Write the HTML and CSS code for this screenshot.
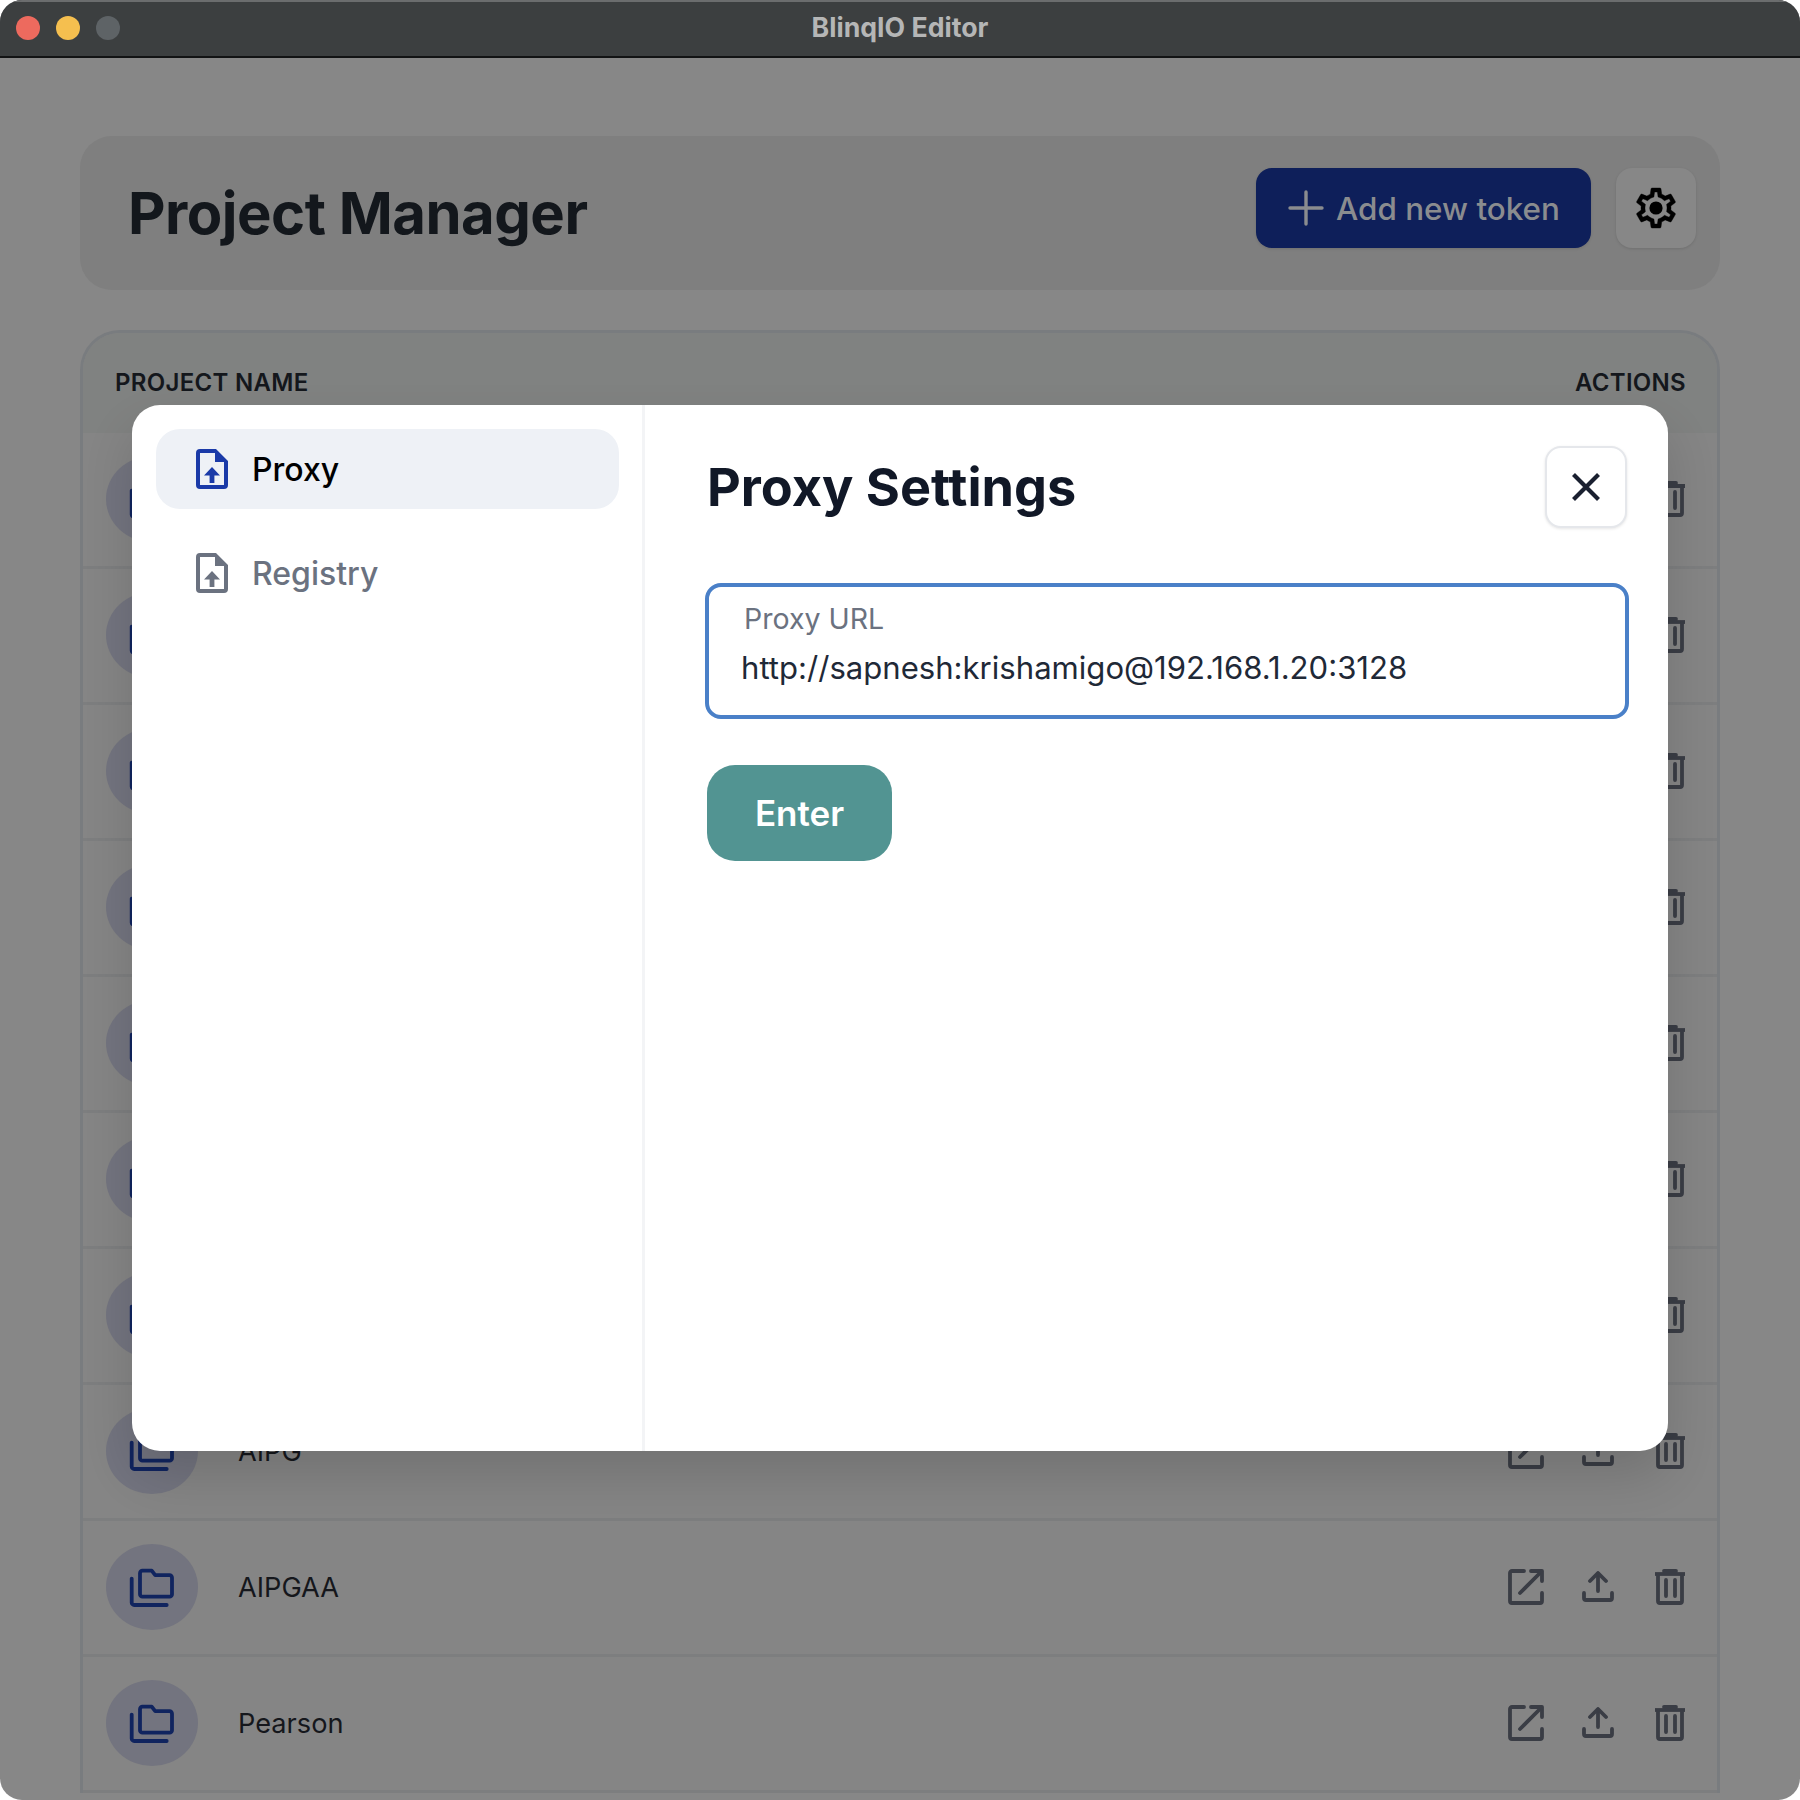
FILE: index.html
```html
<!DOCTYPE html>
<html lang="en">
<head>
<meta charset="utf-8">
<title>BlinqIO Editor</title>
<link rel="stylesheet" href="styles.css">
</head>
<body>
<svg class="defs" width="0" height="0" aria-hidden="true">
  <symbol id="i-folder" viewBox="0 0 46 40">
    <g fill="none" stroke="currentColor" stroke-width="3.8" stroke-linecap="round" stroke-linejoin="round">
      <path d="M3.7 11.6V35.5a2.5 2.5 0 0 0 2.5 2.5H38.7"/>
      <path d="M14.5 3.7h9.2l3.5 4.5h14.3a2.5 2.5 0 0 1 2.5 2.5v16.5a2.5 2.5 0 0 1-2.5 2.5H14.5a2.5 2.5 0 0 1-2.5-2.5V6.2a2.5 2.5 0 0 1 2.5-2.5z"/>
    </g>
  </symbol>
  <symbol id="i-open" viewBox="0 0 36 36">
    <g fill="none" stroke="currentColor" stroke-width="3.8" stroke-linecap="round" stroke-linejoin="round">
      <path d="M16 2H4a2 2 0 0 0-2 2v28a2 2 0 0 0 2 2h28a2 2 0 0 0 2-2V24"/>
      <path d="M12 24L33 3"/>
      <path d="M23 2h11v10"/>
    </g>
  </symbol>
  <symbol id="i-upload" viewBox="0 0 32 31">
    <g fill="none" stroke="currentColor" stroke-width="3.8" stroke-linecap="round" stroke-linejoin="round">
      <path d="M16 3v17"/>
      <path d="M8 10l8-8 8 8"/>
      <path d="M2 22v5a2 2 0 0 0 2 2h24a2 2 0 0 0 2-2v-5"/>
    </g>
  </symbol>
  <symbol id="i-trash" viewBox="0 0 32 36">
    <g fill="none" stroke="currentColor" stroke-width="3.8" stroke-linejoin="round">
      <path d="M1 5h30"/>
      <path d="M10 2h12" stroke-linecap="round"/>
      <path d="M4 5v27a2 2 0 0 0 2 2h20a2 2 0 0 0 2-2V5"/>
      <path d="M12 11v16M21 11v16" stroke-linecap="round"/>
    </g>
  </symbol>
  <symbol id="i-doc" viewBox="0 0 32 40">
    <path fill="currentColor" fill-rule="evenodd" d="M4 0h16l12 12v24a4 4 0 0 1-4 4H4a4 4 0 0 1-4-4V4a4 4 0 0 1 4-4zM4 4v32h24V13H19V4z"/>
    <path fill="currentColor" d="M16 18l8 8.5h-5.6V34h-4.8v-7.5H8z"/>
  </symbol>
</svg>

<div class="window">
  <header class="titlebar">
    <div class="lights">
      <span class="light light-red"></span>
      <span class="light light-yellow"></span>
      <span class="light light-gray"></span>
    </div>
    <div class="app-title">BlinqIO Editor</div>
  </header>

  <main class="page">
    <section class="page-head">
      <h1 class="page-title">Project Manager</h1>
      <div class="head-actions">
        <button class="btn-add" type="button">
          <svg class="plus" viewBox="0 0 36 36"><path d="M18 2v32M2 18h32" fill="none" stroke="currentColor" stroke-width="3.4" stroke-linecap="round"/></svg>
          <span class="btn-add-text">Add new token</span>
        </button>
        <button class="btn-gear" type="button">
          <svg class="gear" viewBox="0 0 24 24"><path fill="currentColor" stroke="currentColor" stroke-width=".2" d="M19.43 12.98c.04-.32.07-.64.07-.98 0-.34-.03-.66-.07-.98l2.11-1.65c.19-.15.24-.42.12-.64l-2-3.46c-.09-.16-.26-.25-.44-.25-.06 0-.12.01-.17.03l-2.49 1c-.52-.4-1.08-.73-1.69-.98l-.38-2.65C14.46 2.18 14.25 2 14 2h-4c-.25 0-.46.18-.49.42l-.38 2.65c-.61.25-1.17.59-1.69.98l-2.49-1c-.06-.02-.12-.03-.18-.03-.17 0-.34.09-.43.25l-2 3.46c-.13.22-.07.49.12.64l2.11 1.65c-.04.32-.07.65-.07.98 0 .33.03.66.07.98l-2.11 1.65c-.19.15-.24.42-.12.64l2 3.46c.09.16.26.25.44.25.06 0 .12-.01.17-.03l2.49-1c.52.4 1.08.73 1.69.98l.38 2.65c.03.24.24.42.49.42h4c.25 0 .46-.18.49-.42l.38-2.65c.61-.25 1.17-.59 1.69-.98l2.49 1c.06.02.12.03.18.03.17 0 .34-.09.43-.25l2-3.46c.12-.22.07-.49-.12-.64l-2.11-1.65zm-1.98-1.71c.04.31.05.52.05.73 0 .21-.02.43-.05.73l-.14 1.13.89.7 1.08.84-.7 1.21-1.27-.51-1.04-.42-.9.68c-.43.32-.84.56-1.25.73l-1.06.43-.16 1.13-.2 1.35h-1.4l-.19-1.35-.16-1.13-1.06-.43c-.43-.18-.83-.41-1.23-.71l-.91-.7-1.06.43-1.27.51-.7-1.21 1.08-.84.89-.7-.14-1.13c-.03-.31-.05-.54-.05-.74s.02-.43.05-.73l.14-1.13-.89-.7-1.08-.84.7-1.21 1.27.51 1.04.42.9-.68c.43-.32.84-.56 1.25-.73l1.06-.43.16-1.13.2-1.35h1.39l.19 1.35.16 1.13 1.06.43c.43.18.83.41 1.23.71l.91.7 1.06-.43 1.27-.51.7 1.21-1.07.85-.89.7.14 1.13z"/><circle cx="12" cy="12" r="3.3" fill="currentColor"/></svg>
        </button>
      </div>
    </section>

    <section class="table">
      <div class="table-head">
        <span>PROJECT NAME</span>
        <span>ACTIONS</span>
      </div>
      <div class="row"><span class="badge"><svg class="folder"><use href="#i-folder"/></svg></span><span class="name"></span><span class="acts"><svg class="a-open"><use href="#i-open"/></svg><svg class="a-upload"><use href="#i-upload"/></svg><svg class="a-trash"><use href="#i-trash"/></svg></span></div>
      <div class="row"><span class="badge"><svg class="folder"><use href="#i-folder"/></svg></span><span class="name"></span><span class="acts"><svg class="a-open"><use href="#i-open"/></svg><svg class="a-upload"><use href="#i-upload"/></svg><svg class="a-trash"><use href="#i-trash"/></svg></span></div>
      <div class="row"><span class="badge"><svg class="folder"><use href="#i-folder"/></svg></span><span class="name"></span><span class="acts"><svg class="a-open"><use href="#i-open"/></svg><svg class="a-upload"><use href="#i-upload"/></svg><svg class="a-trash"><use href="#i-trash"/></svg></span></div>
      <div class="row"><span class="badge"><svg class="folder"><use href="#i-folder"/></svg></span><span class="name"></span><span class="acts"><svg class="a-open"><use href="#i-open"/></svg><svg class="a-upload"><use href="#i-upload"/></svg><svg class="a-trash"><use href="#i-trash"/></svg></span></div>
      <div class="row"><span class="badge"><svg class="folder"><use href="#i-folder"/></svg></span><span class="name"></span><span class="acts"><svg class="a-open"><use href="#i-open"/></svg><svg class="a-upload"><use href="#i-upload"/></svg><svg class="a-trash"><use href="#i-trash"/></svg></span></div>
      <div class="row"><span class="badge"><svg class="folder"><use href="#i-folder"/></svg></span><span class="name"></span><span class="acts"><svg class="a-open"><use href="#i-open"/></svg><svg class="a-upload"><use href="#i-upload"/></svg><svg class="a-trash"><use href="#i-trash"/></svg></span></div>
      <div class="row"><span class="badge"><svg class="folder"><use href="#i-folder"/></svg></span><span class="name"></span><span class="acts"><svg class="a-open"><use href="#i-open"/></svg><svg class="a-upload"><use href="#i-upload"/></svg><svg class="a-trash"><use href="#i-trash"/></svg></span></div>
      <div class="row"><span class="badge"><svg class="folder"><use href="#i-folder"/></svg></span><span class="name">AIPG</span><span class="acts"><svg class="a-open"><use href="#i-open"/></svg><svg class="a-upload"><use href="#i-upload"/></svg><svg class="a-trash"><use href="#i-trash"/></svg></span></div>
      <div class="row"><span class="badge"><svg class="folder"><use href="#i-folder"/></svg></span><span class="name">AIPGAA</span><span class="acts"><svg class="a-open"><use href="#i-open"/></svg><svg class="a-upload"><use href="#i-upload"/></svg><svg class="a-trash"><use href="#i-trash"/></svg></span></div>
      <div class="row"><span class="badge"><svg class="folder"><use href="#i-folder"/></svg></span><span class="name">Pearson</span><span class="acts"><svg class="a-open"><use href="#i-open"/></svg><svg class="a-upload"><use href="#i-upload"/></svg><svg class="a-trash"><use href="#i-trash"/></svg></span></div>
    </section>
  </main>

  <div class="modal">
    <nav class="side">
      <a class="side-item is-active"><svg class="doc"><use href="#i-doc"/></svg><span>Proxy</span></a>
      <a class="side-item"><svg class="doc"><use href="#i-doc"/></svg><span>Registry</span></a>
    </nav>
    <div class="content">
      <div class="content-head">
        <h2 class="content-title">Proxy Settings</h2>
        <button class="btn-close" type="button">
          <svg class="x" viewBox="0 0 28 28"><path d="M1.5 1.5l25 25M26.5 1.5l-25 25" fill="none" stroke="currentColor" stroke-width="4.2"/></svg>
        </button>
      </div>
      <div class="field">
        <div class="field-label">Proxy URL</div>
        <div class="field-value">http://sapnesh:krishamigo@192.168.1.20:3128</div>
      </div>
      <button class="btn-enter" type="button">Enter</button>
    </div>
  </div>
</div>
</body>
</html>
```

FILE: styles.css
```css
* { box-sizing: border-box; }
html, body { margin: 0; padding: 0; background: #fff; }
body { width: 1800px; height: 1800px; font-family: Inter, "Liberation Sans", sans-serif; }
.defs { position: absolute; }
button { font-family: inherit; border: 0; padding: 0; }

.window {
  position: relative;
  width: 1800px;
  height: 1800px;
  border-radius: 22px;
  overflow: hidden;
  background: #878787;
}

.titlebar {
  position: relative;
  height: 58px;
  background: #3c3f40;
  border-top: 2px solid #6b6d6e;
  border-bottom: 2px solid #121314;
  display: flex;
  align-items: center;
  justify-content: center;
}
.lights { position: absolute; left: 16px; top: 14px; display: flex; gap: 16px; }
.light { width: 24px; height: 24px; border-radius: 50%; }
.light-red { background: #ed6a5e; }
.light-yellow { background: #f5bf4f; }
.light-gray { background: #5e6366; }
.app-title { margin-top: -4px; font-size: 26.7px; font-weight: 700; color: #b5b6b6; }

.page { padding: 78px 80px 0 80px; }

.page-head {
  height: 154px;
  background: #7f7f7f;
  border-radius: 32px;
  padding: 32px 24px 0 49px;
  display: flex;
  justify-content: space-between;
  align-items: flex-start;
}
.page-title {
  margin: 9px 0 0 -1px;
  font-size: 58px;
  line-height: 72px;
  font-weight: 700;
  letter-spacing: -0.5px;
  color: #13171c;
}
.head-actions { display: flex; gap: 25px; }
.btn-add {
  width: 335px;
  height: 80px;
  border-radius: 16px;
  background: #0e1f5a;
  color: #8a8c8f;
  display: flex;
  align-items: center;
  gap: 12px;
  padding-left: 32px;
  font-size: 31.4px;
  font-weight: 500;
  box-shadow: 0 1px 3px rgba(0,0,0,.12);
}
.btn-add-text { margin-top: 2px; }
.plus { width: 36px; height: 36px; }
.btn-gear {
  width: 80px;
  height: 80px;
  border-radius: 16px;
  background: #878787;
  color: #000;
  display: flex;
  align-items: center;
  justify-content: center;
  box-shadow: 0 1px 3px rgba(0,0,0,.12);
}
.gear { width: 48px; height: 48px; }

.table {
  margin-top: 40px;
  border: 3px solid #797c7f;
  border-bottom: 0;
  border-radius: 40px 40px 0 0;
  background: #858585;
  overflow: hidden;
}
.table-head {
  height: 100px;
  padding: 35px 31px 0 32px;
  background: #808281;
  display: flex;
  justify-content: space-between;
  font-size: 24px;
  line-height: 30px;
  font-weight: 600;
  letter-spacing: 0.3px;
  color: #14171c;
}
.row {
  height: 136px;
  border-bottom: 3px solid #7d7e7f;
  padding: 0 31px 2px 23px;
  display: flex;
  align-items: center;
}
.badge {
  width: 92px;
  height: 86px;
  border-radius: 50%;
  background: #73747f;
  color: #10245f;
  display: flex;
  align-items: center;
  justify-content: center;
  flex: none;
}
.folder { width: 46px; height: 40px; margin-right: 2px; }
.name {
  margin: 2px 0 0 40px;
  font-size: 27.2px;
  color: #15171c;
  flex: 1;
}
.acts { display: flex; align-items: center; color: #3a3d45; }
.a-open { width: 36px; height: 36px; }
.a-upload { width: 32px; height: 31px; margin-left: 38px; }
.a-trash { width: 32px; height: 36px; margin-left: 40px; }

.modal {
  position: absolute;
  left: 132px;
  top: 405px;
  width: 1536px;
  height: 1046px;
  background: #fff;
  border-radius: 28px;
  display: flex;
  box-shadow: 0 25px 50px rgba(0,0,0,.14);
}
.side {
  width: 513px;
  flex: none;
  padding: 24px 23px 0 24px;
  border-right: 3px solid #f3f4f6;
  display: flex;
  flex-direction: column;
  gap: 24px;
}
.side-item {
  height: 80px;
  border-radius: 24px;
  padding-left: 40px;
  display: flex;
  align-items: center;
  gap: 24px;
  font-size: 32px;
  font-weight: 500;
  color: #6b7280;
}
.side-item.is-active { background: #eef1f6; color: #000; }
.side-item.is-active .doc { color: #1a3aa8; }
.doc { width: 32px; height: 40px; }

.content { flex: 1; padding: 41px 41px 0 62px; }
.content-head {
  display: flex;
  justify-content: space-between;
  align-items: center;
  height: 82px;
}
.content-title {
  margin: 0;
  font-size: 52.2px;
  font-weight: 700;
  color: #111827;
}
.btn-close {
  width: 82px;
  height: 82px;
  border-radius: 16px;
  background: #fff;
  border: 2px solid #e5e7eb;
  color: #1a2030;
  display: flex;
  align-items: center;
  justify-content: center;
  box-shadow: 0 1px 3px rgba(0,0,0,.1);
}
.x { width: 28px; height: 28px; }

.field {
  margin: 55px -2px 0 -2px;
  height: 136px;
  border: 4px solid #4a80c8;
  border-radius: 16px;
  padding: 14px 0 0 35px;
}
.field-label { font-size: 28.5px; line-height: 36px; color: #6b7280; }
.field-value { margin: 10px 0 0 -3px; font-size: 31.1px; line-height: 42px; color: #1f2937; }

.btn-enter {
  display: block;
  margin-top: 46px;
  width: 185px;
  height: 96px;
  border-radius: 28px;
  background: #529492;
  color: #fff;
  font-size: 35px;
  font-weight: 600;
}
```
